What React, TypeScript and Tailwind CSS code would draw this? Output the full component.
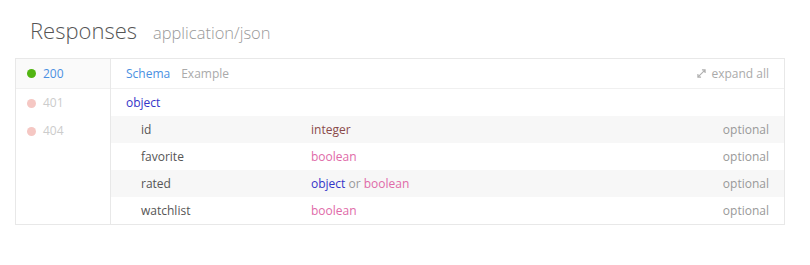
import React from 'react';

type Field = { name: string; type: React.ReactNode };

const fields: Field[] = [
  { name: 'id', type: <span className="text-[#8a4a4a]">integer</span> },
  { name: 'favorite', type: <span className="text-[#e06aa8]">boolean</span> },
  {
    name: 'rated',
    type: (
      <>
        <span className="text-[#3434c8]">object</span>
        <span className="text-[#999]"> or </span>
        <span className="text-[#e06aa8]">boolean</span>
      </>
    ),
  },
  { name: 'watchlist', type: <span className="text-[#e06aa8]">boolean</span> },
];

function ExpandIcon() {
  return (
    <svg width="9" height="9" viewBox="0 0 10 10" className="text-[#b0b0b0]">
      <path d="M1.5 8.5 L8.5 1.5 M5.5 1 H9 V4.5 M1 5.5 V9 H4.5" stroke="currentColor" strokeWidth="1.3" fill="none" />
    </svg>
  );
}

export default function App() {
  return (
    <div className="w-[810px] h-[265px] bg-white px-[15px] pt-[14px] font-['Open_Sans',sans-serif] text-[12px]">
      <div className="flex items-baseline gap-[16px] pl-[15px] h-[44px]">
        <h2 className="text-[22px] font-light text-[#555]">Responses</h2>
        <span className="text-[16.5px] font-light text-[#999]">application/json</span>
      </div>
      <div className="flex border border-[#e8e8e8] w-[770px]">
        <div className="w-[95px] border-r border-[#e8e8e8]">
          <div className="flex items-center h-[30px] pl-[11px] gap-[7px] bg-[#fafafa] border-b border-[#f0f0f0]">
            <span className="w-[9px] h-[9px] rounded-full bg-[#52b512]" />
            <span className="text-[#4a90e2]">200</span>
          </div>
          <div className="flex items-center h-[28px] pl-[11px] gap-[7px]">
            <span className="w-[9px] h-[9px] rounded-full bg-[#f5c7c3]" />
            <span className="text-[#ccc]">401</span>
          </div>
          <div className="flex items-center h-[28px] pl-[11px] gap-[7px]">
            <span className="w-[9px] h-[9px] rounded-full bg-[#f5c7c3]" />
            <span className="text-[#ccc]">404</span>
          </div>
        </div>
        <div className="flex-1">
          <div className="flex items-center justify-between h-[30px] px-[15px] border-b border-[#f0f0f0]">
            <div className="flex gap-[11px]">
              <span className="text-[#4a90e2]">Schema</span>
              <span className="text-[#aaa]">Example</span>
            </div>
            <div className="flex items-center gap-[5px] text-[#aaa]">
              <ExpandIcon />
              <span>expand all</span>
            </div>
          </div>
          <div className="h-[27px] flex items-center px-[15px] text-[#3434c8]">object</div>
          {fields.map((f, i) => (
            <div
              key={f.name}
              className={`h-[27px] flex items-center pl-[30px] pr-[15px] ${i % 2 === 0 ? 'bg-[#f7f7f7]' : 'bg-white'}`}
            >
              <span className="w-[170px] text-[#555]">{f.name}</span>
              <span className="flex-1">{f.type}</span>
              <span className="text-[#999]">optional</span>
            </div>
          ))}
        </div>
      </div>
    </div>
  );
}
